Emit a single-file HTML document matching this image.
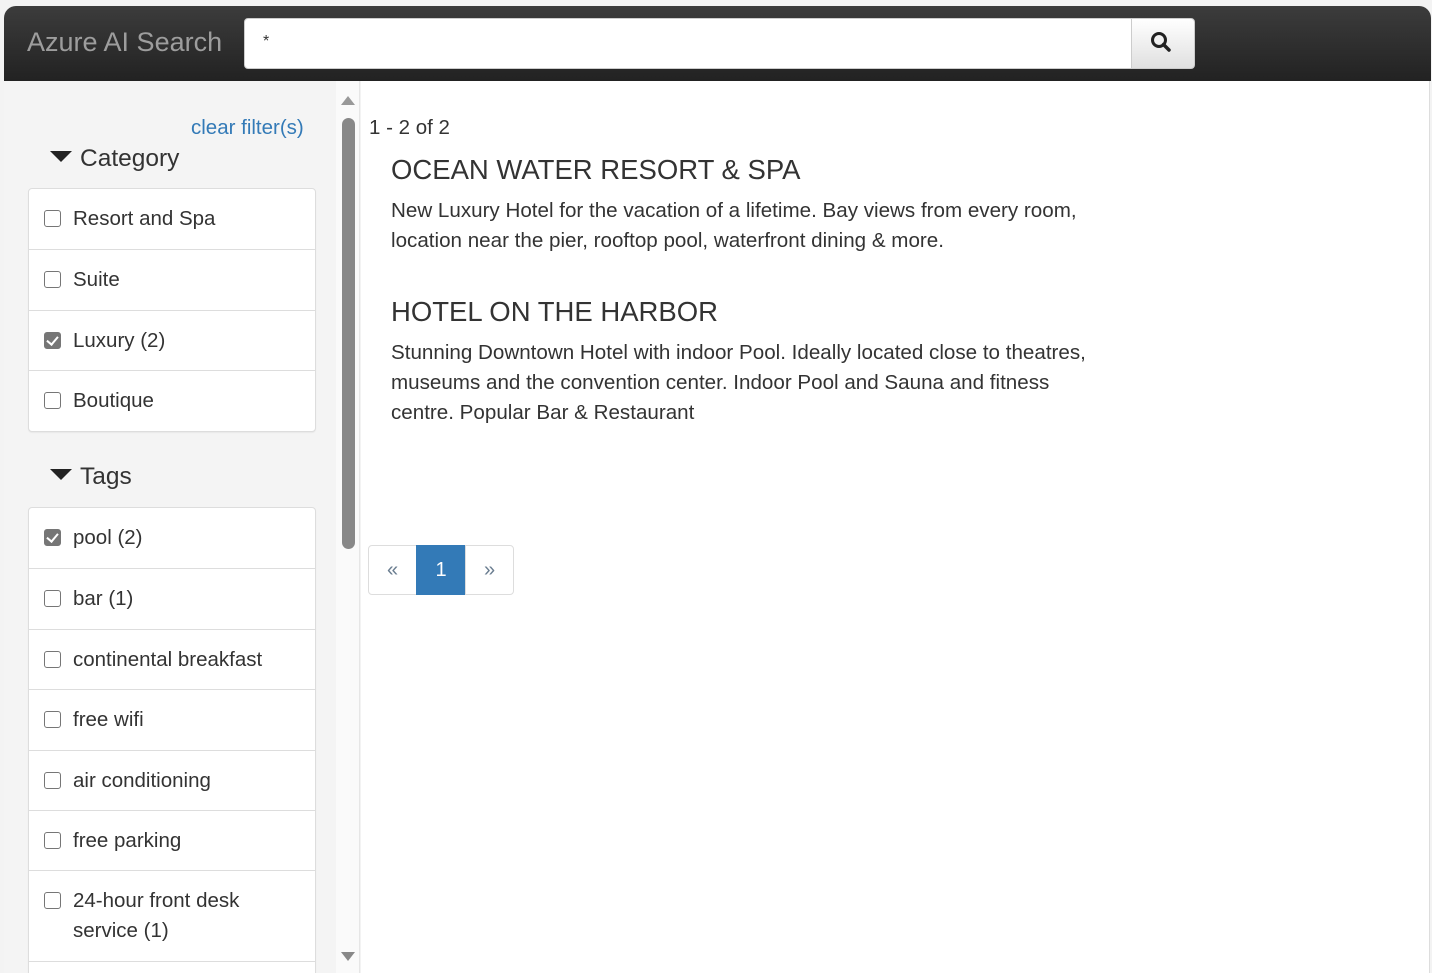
<!DOCTYPE html>
<html style="height:973px;overflow:hidden"><head><style>
*{box-sizing:border-box;margin:0;padding:0}
body{width:1432px;height:973px;overflow:hidden;background:#f3f3f3;font-family:"Liberation Sans",Arial,sans-serif;color:#333;position:relative}
.hdr{position:absolute;left:4px;top:6px;width:1427px;height:75px;border-radius:12px 12px 0 0;background:linear-gradient(#3c3c3c,#222)}
.brand{position:absolute;left:23px;top:21px;font-size:27px;color:#9d9d9d}
.inp{position:absolute;left:240px;top:12px;width:888px;height:51px;background:#fff;border-radius:4px 0 0 4px;border:1px solid #ccc;font-size:16px;padding:14px 18px}
.btn{position:absolute;left:1127px;top:12px;width:64px;height:51px;background:linear-gradient(#fff,#e0e0e0);border:1px solid #ccc;border-radius:0 4px 4px 0}
.side{position:absolute;left:4px;top:81px;width:332px;height:892px;background:#f4f4f4;overflow:hidden}
.track{position:absolute;left:336px;top:81px;width:24px;height:892px;background:#fafafa;border-right:1px solid #e6e6e6}
.thumb{position:absolute;left:342px;top:118px;width:13px;height:431px;background:#888;border-radius:7px}
.main{position:absolute;left:361px;top:81px;width:1069px;height:892px;background:#fff;border-right:1px solid #ddd}
.clear{position:absolute;left:191px;top:116px;font-size:20.5px;color:#337ab7}
.fh{position:absolute;left:46px;font-size:24.5px;color:#333}
.fh:before{content:"";display:inline-block;border-left:11px solid transparent;border-right:11px solid transparent;border-top:11px solid #222;margin-right:8px;vertical-align:4px}
.box{position:absolute;left:24px;width:288px;background:#fff;border:1px solid #ddd;border-radius:4px;box-shadow:0 1px 1px rgba(0,0,0,.05)}
.row{height:60.4px;border-top:1px solid #ddd;font-size:20.5px;padding:15px 0 0 44px;position:relative;line-height:30px}
.row:first-child{border-top:none}
.cb{position:absolute;left:15px;top:21px;width:17px;height:17px;border:1.5px solid #767676;border-radius:3px;background:#fff}
.cb.on{background:#767676}
.cb.on:after{content:"";position:absolute;left:4px;top:1px;width:5px;height:9px;border:solid #fff;border-width:0 2px 2px 0;transform:rotate(40deg)}
.t{position:absolute;font-size:20.5px;color:#333}
.h{position:absolute;left:391px;font-size:27.5px;color:#333}
.d{position:absolute;left:391px;font-size:20.6px;line-height:30px;color:#333;width:730px}
.pg{position:absolute;top:545px;height:50px;border:1px solid #ddd;font-size:20px;text-align:center;line-height:48px;color:#6a7d90}
</style></head><body>
<div class="hdr"><div class="brand">Azure AI Search</div><div class="inp">*</div>
<div class="btn"><svg width="64" height="51" viewBox="0 0 64 51"><circle cx="27" cy="21" r="6.5" fill="none" stroke="#222" stroke-width="3"/><path d="M31.5 25.5L37 31" stroke="#222" stroke-width="3.5" stroke-linecap="round"/></svg></div></div>
<div class="side">
<div class="clear" style="left:187px;top:35px">clear filter(s)</div>
<div class="fh" style="top:64px">Category</div>
<div class="box" style="top:107px">
<div class="row"><span class="cb"></span>Resort and Spa</div>
<div class="row"><span class="cb"></span>Suite</div>
<div class="row"><span class="cb on"></span>Luxury (2)</div>
<div class="row"><span class="cb"></span>Boutique</div>
</div>
<div class="fh" style="top:382px">Tags</div>
<div class="box" style="top:426px;height:480px">
<div class="row"><span class="cb on"></span>pool (2)</div>
<div class="row"><span class="cb"></span>bar (1)</div>
<div class="row"><span class="cb"></span>continental breakfast</div>
<div class="row"><span class="cb"></span>free wifi</div>
<div class="row"><span class="cb"></span>air conditioning</div>
<div class="row"><span class="cb"></span>free parking</div>
<div class="row" style="height:90.5px"><span class="cb"></span>24-hour front desk<br>service (1)</div>
<div class="row"></div>
</div>
</div>
<div class="track"></div>
<svg style="position:absolute;left:340px;top:94px" width="16" height="12"><path d="M1 11L8 2L15 11Z" fill="#999"/></svg>
<div class="thumb"></div>
<svg style="position:absolute;left:340px;top:951px" width="16" height="12"><path d="M1 1L8 10L15 1Z" fill="#888"/></svg>
<div class="main"></div>
<div class="t" style="left:369px;top:116px">1 - 2 of 2</div>
<div class="h" style="top:154px">OCEAN WATER RESORT &amp; SPA</div>
<div class="d" style="top:196px">New Luxury Hotel for the vacation of a lifetime. Bay views from every room, location near the pier, rooftop pool, waterfront dining &amp; more.</div>
<div class="h" style="top:296px">HOTEL ON THE HARBOR</div>
<div class="d" style="top:338px;width:715px">Stunning Downtown Hotel with indoor Pool. Ideally located close to theatres, museums and the convention center. Indoor Pool and Sauna and fitness centre. Popular Bar &amp; Restaurant</div>
<div class="pg" style="left:368px;width:49px;border-radius:4px 0 0 4px">«</div>
<div class="pg" style="left:416px;width:50px;background:#337ab7;border-color:#337ab7;color:#fff">1</div>
<div class="pg" style="left:465px;width:49px;border-radius:0 4px 4px 0">»</div>
</body></html>
